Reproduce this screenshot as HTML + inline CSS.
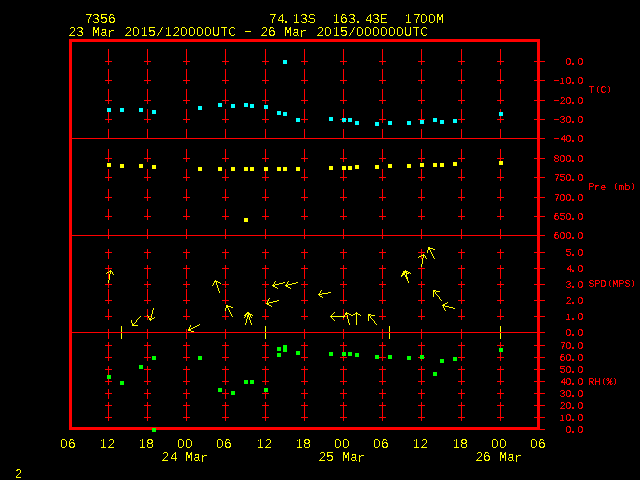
<!DOCTYPE html>
<html><head><meta charset="utf-8"><title>7356 station time series</title>
<style>
html,body{margin:0;padding:0;background:#000;width:640px;height:480px;overflow:hidden}
svg{display:block;will-change:transform}
text{font-family:"Liberation Mono",monospace}
.z{font-family:"Liberation Sans",sans-serif}
.s{font-family:"Liberation Serif",serif}
</style></head><body>
<svg width="640" height="480" viewBox="0 0 640 480" shape-rendering="crispEdges">
<title>Station 7356 time series: T(C), Pre (mb), SPD(MPS), RH(%)</title>
<defs>
<filter id="crispL" filterUnits="userSpaceOnUse" x="0" y="0" width="640" height="480" color-interpolation-filters="sRGB"><feComponentTransfer><feFuncA type="discrete" tableValues="0 0 0 1 1"/></feComponentTransfer></filter>
<filter id="crispS" filterUnits="userSpaceOnUse" x="0" y="0" width="640" height="480" color-interpolation-filters="sRGB"><feComponentTransfer><feFuncA type="discrete" tableValues="0 0 1 1 1"/></feComponentTransfer></filter>
</defs>
<rect width="640" height="480" fill="#000"/>
<path fill="#ff0000" d="M69 39h471v3h-471zM69 42h3v96h-3zM537 42h3v19h-3zM108 49h1v12h-1zM147 49h1v12h-1zM186 49h1v12h-1zM225 49h1v12h-1zM265 49h1v12h-1zM304 49h1v12h-1zM343 49h1v12h-1zM382 49h1v12h-1zM421 49h1v12h-1zM461 49h1v12h-1zM500 49h1v12h-1zM105 61h7v1h-7zM144 61h7v1h-7zM183 61h7v1h-7zM222 61h7v1h-7zM262 61h7v1h-7zM301 61h7v1h-7zM340 61h7v1h-7zM379 61h7v1h-7zM418 61h7v1h-7zM458 61h7v1h-7zM497 61h7v1h-7zM534 61h11v1h-11zM108 62h1v3h-1zM147 62h1v3h-1zM186 62h1v3h-1zM225 62h1v3h-1zM265 62h1v3h-1zM304 62h1v3h-1zM343 62h1v3h-1zM382 62h1v3h-1zM421 62h1v3h-1zM461 62h1v3h-1zM500 62h1v3h-1zM537 62h3v18h-3zM108 69h1v11h-1zM147 69h1v11h-1zM186 69h1v11h-1zM225 69h1v11h-1zM265 69h1v11h-1zM304 69h1v11h-1zM343 69h1v11h-1zM382 69h1v11h-1zM421 69h1v11h-1zM461 69h1v11h-1zM500 69h1v11h-1zM105 80h7v1h-7zM144 80h7v1h-7zM183 80h7v1h-7zM222 80h7v1h-7zM262 80h7v1h-7zM301 80h7v1h-7zM340 80h7v1h-7zM379 80h7v1h-7zM418 80h7v1h-7zM458 80h7v1h-7zM497 80h7v1h-7zM534 80h11v1h-11zM108 81h1v3h-1zM147 81h1v3h-1zM186 81h1v3h-1zM225 81h1v3h-1zM265 81h1v3h-1zM304 81h1v3h-1zM343 81h1v3h-1zM382 81h1v3h-1zM421 81h1v3h-1zM461 81h1v3h-1zM500 81h1v3h-1zM537 81h3v19h-3zM108 89h1v11h-1zM147 89h1v11h-1zM186 89h1v11h-1zM225 89h1v11h-1zM265 89h1v11h-1zM304 89h1v11h-1zM343 89h1v11h-1zM382 89h1v11h-1zM421 89h1v11h-1zM461 89h1v11h-1zM500 89h1v11h-1zM105 100h7v1h-7zM144 100h7v1h-7zM183 100h7v1h-7zM222 100h7v1h-7zM262 100h7v1h-7zM301 100h7v1h-7zM340 100h7v1h-7zM379 100h7v1h-7zM418 100h7v1h-7zM458 100h7v1h-7zM497 100h7v1h-7zM534 100h11v1h-11zM108 101h1v3h-1zM147 101h1v3h-1zM186 101h1v3h-1zM225 101h1v3h-1zM265 101h1v3h-1zM304 101h1v3h-1zM343 101h1v3h-1zM382 101h1v3h-1zM421 101h1v3h-1zM461 101h1v3h-1zM500 101h1v3h-1zM537 101h3v18h-3zM147 109h1v10h-1zM186 109h1v10h-1zM225 109h1v10h-1zM265 109h1v10h-1zM304 109h1v10h-1zM343 109h1v9h-1zM382 109h1v10h-1zM421 109h1v10h-1zM461 109h1v10h-1zM500 109h1v3h-1zM108 112h1v7h-1zM500 116h1v3h-1zM105 119h7v1h-7zM144 119h7v1h-7zM183 119h7v1h-7zM222 119h7v1h-7zM262 119h7v1h-7zM301 119h7v1h-7zM340 119h2v1h-2zM346 119h1v1h-1zM379 119h7v1h-7zM418 119h7v1h-7zM458 119h7v1h-7zM497 119h7v1h-7zM534 119h11v1h-11zM108 120h1v3h-1zM147 120h1v3h-1zM186 120h1v3h-1zM225 120h1v3h-1zM265 120h1v3h-1zM304 120h1v3h-1zM382 120h1v3h-1zM461 120h1v3h-1zM500 120h1v3h-1zM537 120h3v18h-3zM343 122h1v1h-1zM108 129h1v9h-1zM147 129h1v9h-1zM186 129h1v9h-1zM225 129h1v9h-1zM265 129h1v9h-1zM304 129h1v9h-1zM343 129h1v9h-1zM382 129h1v9h-1zM421 129h1v9h-1zM461 129h1v9h-1zM500 129h1v9h-1zM69 138h476v1h-476zM69 139h3v96h-3zM537 139h3v19h-3zM108 149h1v9h-1zM147 149h1v9h-1zM186 149h1v9h-1zM225 149h1v9h-1zM265 149h1v9h-1zM304 149h1v9h-1zM343 149h1v9h-1zM382 149h1v9h-1zM421 149h1v9h-1zM461 149h1v9h-1zM500 149h1v9h-1zM105 158h7v1h-7zM144 158h7v1h-7zM183 158h7v1h-7zM222 158h7v1h-7zM262 158h7v1h-7zM301 158h7v1h-7zM340 158h7v1h-7zM379 158h7v1h-7zM418 158h7v1h-7zM458 158h7v1h-7zM497 158h7v1h-7zM534 158h11v1h-11zM108 159h1v3h-1zM147 159h1v3h-1zM186 159h1v3h-1zM225 159h1v3h-1zM265 159h1v3h-1zM304 159h1v3h-1zM343 159h1v3h-1zM382 159h1v3h-1zM421 159h1v3h-1zM461 159h1v3h-1zM500 159h1v2h-1zM537 159h3v18h-3zM108 169h1v8h-1zM147 169h1v8h-1zM186 169h1v8h-1zM225 169h1v8h-1zM304 169h1v8h-1zM382 169h1v8h-1zM421 169h1v8h-1zM461 169h1v8h-1zM500 169h1v8h-1zM343 170h1v7h-1zM265 171h1v6h-1zM105 177h7v1h-7zM144 177h7v1h-7zM183 177h7v1h-7zM222 177h7v1h-7zM262 177h7v1h-7zM301 177h7v1h-7zM340 177h7v1h-7zM379 177h7v1h-7zM418 177h7v1h-7zM458 177h7v1h-7zM497 177h7v1h-7zM534 177h11v1h-11zM108 178h1v3h-1zM147 178h1v3h-1zM186 178h1v3h-1zM225 178h1v3h-1zM265 178h1v3h-1zM304 178h1v3h-1zM343 178h1v3h-1zM382 178h1v3h-1zM421 178h1v3h-1zM461 178h1v3h-1zM500 178h1v3h-1zM537 178h3v19h-3zM108 189h1v8h-1zM147 189h1v8h-1zM186 189h1v8h-1zM225 189h1v8h-1zM265 189h1v8h-1zM304 189h1v8h-1zM343 189h1v8h-1zM382 189h1v8h-1zM421 189h1v8h-1zM461 189h1v8h-1zM500 189h1v8h-1zM105 197h7v1h-7zM144 197h7v1h-7zM183 197h7v1h-7zM222 197h7v1h-7zM262 197h7v1h-7zM301 197h7v1h-7zM340 197h7v1h-7zM379 197h7v1h-7zM418 197h7v1h-7zM458 197h7v1h-7zM497 197h7v1h-7zM534 197h11v1h-11zM108 198h1v3h-1zM147 198h1v3h-1zM186 198h1v3h-1zM225 198h1v3h-1zM265 198h1v3h-1zM304 198h1v3h-1zM343 198h1v3h-1zM382 198h1v3h-1zM421 198h1v3h-1zM461 198h1v3h-1zM500 198h1v3h-1zM537 198h3v18h-3zM108 209h1v7h-1zM147 209h1v7h-1zM186 209h1v7h-1zM225 209h1v7h-1zM265 209h1v7h-1zM304 209h1v7h-1zM343 209h1v7h-1zM382 209h1v7h-1zM421 209h1v7h-1zM461 209h1v7h-1zM500 209h1v7h-1zM105 216h7v1h-7zM144 216h7v1h-7zM183 216h7v1h-7zM222 216h7v1h-7zM262 216h7v1h-7zM301 216h7v1h-7zM340 216h7v1h-7zM379 216h7v1h-7zM418 216h7v1h-7zM458 216h7v1h-7zM497 216h7v1h-7zM534 216h11v1h-11zM108 217h1v3h-1zM147 217h1v3h-1zM186 217h1v3h-1zM225 217h1v3h-1zM265 217h1v3h-1zM304 217h1v3h-1zM343 217h1v3h-1zM382 217h1v3h-1zM421 217h1v3h-1zM461 217h1v3h-1zM500 217h1v3h-1zM537 217h3v18h-3zM108 229h1v6h-1zM147 229h1v6h-1zM186 229h1v6h-1zM225 229h1v6h-1zM265 229h1v6h-1zM304 229h1v6h-1zM343 229h1v6h-1zM382 229h1v6h-1zM421 229h1v6h-1zM461 229h1v6h-1zM500 229h1v6h-1zM69 235h476v1h-476zM69 236h3v96h-3zM108 236h1v3h-1zM147 236h1v3h-1zM186 236h1v3h-1zM225 236h1v3h-1zM265 236h1v3h-1zM304 236h1v3h-1zM343 236h1v3h-1zM382 236h1v3h-1zM421 236h1v3h-1zM461 236h1v3h-1zM500 236h1v3h-1zM537 236h3v16h-3zM108 249h1v3h-1zM147 249h1v3h-1zM186 249h1v3h-1zM225 249h1v3h-1zM265 249h1v3h-1zM304 249h1v3h-1zM343 249h1v3h-1zM382 249h1v3h-1zM421 249h1v3h-1zM461 249h1v3h-1zM500 249h1v3h-1zM105 252h7v1h-7zM144 252h7v1h-7zM183 252h7v1h-7zM222 252h7v1h-7zM262 252h7v1h-7zM301 252h7v1h-7zM340 252h7v1h-7zM379 252h7v1h-7zM418 252h7v1h-7zM458 252h7v1h-7zM497 252h7v1h-7zM534 252h11v1h-11zM108 253h1v6h-1zM147 253h1v6h-1zM186 253h1v6h-1zM225 253h1v6h-1zM265 253h1v6h-1zM304 253h1v6h-1zM343 253h1v6h-1zM382 253h1v6h-1zM421 253h1v2h-1zM461 253h1v6h-1zM500 253h1v6h-1zM537 253h3v15h-3zM421 256h1v3h-1zM108 265h1v3h-1zM147 265h1v3h-1zM186 265h1v3h-1zM225 265h1v3h-1zM265 265h1v3h-1zM304 265h1v3h-1zM343 265h1v3h-1zM382 265h1v3h-1zM461 265h1v3h-1zM500 265h1v3h-1zM421 267h1v1h-1zM105 268h7v1h-7zM144 268h7v1h-7zM183 268h7v1h-7zM222 268h7v1h-7zM262 268h7v1h-7zM301 268h7v1h-7zM340 268h7v1h-7zM379 268h7v1h-7zM418 268h7v1h-7zM458 268h7v1h-7zM497 268h7v1h-7zM534 268h11v1h-11zM108 269h1v3h-1zM147 269h1v10h-1zM186 269h1v10h-1zM225 269h1v10h-1zM265 269h1v10h-1zM304 269h1v10h-1zM343 269h1v10h-1zM382 269h1v10h-1zM421 269h1v10h-1zM461 269h1v10h-1zM500 269h1v10h-1zM537 269h3v15h-3zM108 273h1v6h-1zM147 281h1v3h-1zM186 281h1v3h-1zM225 281h1v3h-1zM265 281h1v3h-1zM304 281h1v3h-1zM343 281h1v3h-1zM382 281h1v3h-1zM421 281h1v3h-1zM461 281h1v3h-1zM500 281h1v3h-1zM108 283h1v1h-1zM105 284h7v1h-7zM144 284h7v1h-7zM183 284h7v1h-7zM222 284h7v1h-7zM262 284h7v1h-7zM301 284h7v1h-7zM340 284h7v1h-7zM379 284h7v1h-7zM418 284h7v1h-7zM458 284h7v1h-7zM497 284h7v1h-7zM534 284h11v1h-11zM108 285h1v3h-1zM147 285h1v3h-1zM186 285h1v3h-1zM225 285h1v3h-1zM265 285h1v3h-1zM304 285h1v3h-1zM343 285h1v3h-1zM382 285h1v3h-1zM421 285h1v3h-1zM461 285h1v3h-1zM500 285h1v3h-1zM537 285h3v15h-3zM108 289h1v11h-1zM147 289h1v11h-1zM186 289h1v11h-1zM225 289h1v11h-1zM265 289h1v11h-1zM304 289h1v11h-1zM343 289h1v11h-1zM382 289h1v11h-1zM421 289h1v11h-1zM461 289h1v11h-1zM500 289h1v11h-1zM105 300h7v1h-7zM144 300h7v1h-7zM183 300h7v1h-7zM222 300h7v1h-7zM262 300h6v1h-6zM301 300h7v1h-7zM340 300h7v1h-7zM379 300h7v1h-7zM418 300h7v1h-7zM458 300h7v1h-7zM497 300h7v1h-7zM534 300h11v1h-11zM108 301h1v3h-1zM147 301h1v3h-1zM186 301h1v3h-1zM225 301h1v3h-1zM265 301h1v3h-1zM304 301h1v3h-1zM343 301h1v3h-1zM382 301h1v3h-1zM421 301h1v3h-1zM461 301h1v3h-1zM500 301h1v3h-1zM537 301h3v15h-3zM108 309h1v7h-1zM147 309h1v6h-1zM186 309h1v7h-1zM265 309h1v7h-1zM304 309h1v7h-1zM343 309h1v7h-1zM382 309h1v7h-1zM421 309h1v7h-1zM461 309h1v7h-1zM500 309h1v7h-1zM225 311h1v5h-1zM105 316h7v1h-7zM144 316h4v1h-4zM149 316h2v1h-2zM183 316h7v1h-7zM222 316h7v1h-7zM262 316h7v1h-7zM301 316h7v1h-7zM345 316h2v1h-2zM379 316h7v1h-7zM418 316h7v1h-7zM458 316h7v1h-7zM497 316h7v1h-7zM534 316h11v1h-11zM108 317h1v3h-1zM147 317h1v3h-1zM186 317h1v3h-1zM225 317h1v3h-1zM265 317h1v3h-1zM304 317h1v3h-1zM382 317h1v3h-1zM421 317h1v3h-1zM461 317h1v3h-1zM500 317h1v3h-1zM537 317h3v15h-3zM343 318h1v2h-1zM108 329h1v3h-1zM147 329h1v3h-1zM186 329h1v3h-1zM225 329h1v3h-1zM304 329h1v3h-1zM343 329h1v3h-1zM382 329h1v3h-1zM421 329h1v3h-1zM461 329h1v3h-1zM69 332h476v1h-476zM69 333h3v94h-3zM108 333h1v6h-1zM147 333h1v6h-1zM186 333h1v6h-1zM225 333h1v6h-1zM304 333h1v6h-1zM343 333h1v6h-1zM382 333h1v6h-1zM421 333h1v6h-1zM461 333h1v6h-1zM537 333h3v12h-3zM108 342h1v3h-1zM147 342h1v3h-1zM186 342h1v3h-1zM225 342h1v3h-1zM265 342h1v3h-1zM304 342h1v3h-1zM343 342h1v3h-1zM382 342h1v3h-1zM421 342h1v3h-1zM461 342h1v3h-1zM500 342h1v3h-1zM105 345h7v1h-7zM144 345h7v1h-7zM183 345h7v1h-7zM222 345h7v1h-7zM262 345h7v1h-7zM301 345h7v1h-7zM340 345h7v1h-7zM379 345h7v1h-7zM418 345h7v1h-7zM458 345h7v1h-7zM497 345h7v1h-7zM534 345h11v1h-11zM108 346h1v11h-1zM147 346h1v11h-1zM186 346h1v11h-1zM225 346h1v11h-1zM265 346h1v11h-1zM304 346h1v11h-1zM343 346h1v6h-1zM382 346h1v11h-1zM421 346h1v9h-1zM461 346h1v11h-1zM500 346h1v2h-1zM537 346h3v11h-3zM500 352h1v5h-1zM343 356h1v1h-1zM105 357h7v1h-7zM144 357h7v1h-7zM183 357h7v1h-7zM222 357h7v1h-7zM262 357h7v1h-7zM301 357h7v1h-7zM340 357h7v1h-7zM379 357h7v1h-7zM418 357h2v1h-2zM424 357h1v1h-1zM458 357h7v1h-7zM497 357h7v1h-7zM534 357h11v1h-11zM108 358h1v3h-1zM147 358h1v3h-1zM186 358h1v3h-1zM225 358h1v3h-1zM265 358h1v3h-1zM304 358h1v3h-1zM343 358h1v3h-1zM382 358h1v3h-1zM461 358h1v3h-1zM500 358h1v3h-1zM537 358h3v11h-3zM421 359h1v2h-1zM108 366h1v3h-1zM147 366h1v3h-1zM186 366h1v3h-1zM225 366h1v3h-1zM265 366h1v3h-1zM304 366h1v3h-1zM343 366h1v3h-1zM382 366h1v3h-1zM421 366h1v3h-1zM461 366h1v3h-1zM500 366h1v3h-1zM105 369h7v1h-7zM144 369h7v1h-7zM183 369h7v1h-7zM222 369h7v1h-7zM262 369h7v1h-7zM301 369h7v1h-7zM340 369h7v1h-7zM379 369h7v1h-7zM418 369h7v1h-7zM458 369h7v1h-7zM497 369h7v1h-7zM534 369h11v1h-11zM108 370h1v5h-1zM147 370h1v11h-1zM186 370h1v11h-1zM225 370h1v11h-1zM265 370h1v11h-1zM304 370h1v11h-1zM343 370h1v11h-1zM382 370h1v11h-1zM421 370h1v11h-1zM461 370h1v11h-1zM500 370h1v11h-1zM537 370h3v11h-3zM108 379h1v2h-1zM105 381h7v1h-7zM144 381h7v1h-7zM183 381h7v1h-7zM222 381h7v1h-7zM262 381h7v1h-7zM301 381h7v1h-7zM340 381h7v1h-7zM379 381h7v1h-7zM418 381h7v1h-7zM458 381h7v1h-7zM497 381h7v1h-7zM534 381h11v1h-11zM108 382h1v3h-1zM147 382h1v3h-1zM186 382h1v3h-1zM225 382h1v3h-1zM265 382h1v3h-1zM304 382h1v3h-1zM343 382h1v3h-1zM382 382h1v3h-1zM421 382h1v3h-1zM461 382h1v3h-1zM500 382h1v3h-1zM537 382h3v11h-3zM108 389h1v4h-1zM147 389h1v4h-1zM186 389h1v4h-1zM225 389h1v4h-1zM304 389h1v4h-1zM343 389h1v4h-1zM382 389h1v4h-1zM421 389h1v4h-1zM461 389h1v4h-1zM500 389h1v4h-1zM265 392h1v1h-1zM105 393h7v1h-7zM144 393h7v1h-7zM183 393h7v1h-7zM222 393h7v1h-7zM262 393h7v1h-7zM301 393h7v1h-7zM340 393h7v1h-7zM379 393h7v1h-7zM418 393h7v1h-7zM458 393h7v1h-7zM497 393h7v1h-7zM534 393h11v1h-11zM108 394h1v5h-1zM147 394h1v5h-1zM186 394h1v5h-1zM225 394h1v5h-1zM265 394h1v5h-1zM304 394h1v5h-1zM343 394h1v5h-1zM382 394h1v5h-1zM421 394h1v5h-1zM461 394h1v5h-1zM500 394h1v5h-1zM537 394h3v11h-3zM108 402h1v3h-1zM147 402h1v3h-1zM186 402h1v3h-1zM225 402h1v3h-1zM265 402h1v3h-1zM304 402h1v3h-1zM343 402h1v3h-1zM382 402h1v3h-1zM421 402h1v3h-1zM461 402h1v3h-1zM500 402h1v3h-1zM105 405h7v1h-7zM144 405h7v1h-7zM183 405h7v1h-7zM222 405h7v1h-7zM262 405h7v1h-7zM301 405h7v1h-7zM340 405h7v1h-7zM379 405h7v1h-7zM418 405h7v1h-7zM458 405h7v1h-7zM497 405h7v1h-7zM534 405h11v1h-11zM108 406h1v11h-1zM147 406h1v11h-1zM186 406h1v11h-1zM225 406h1v11h-1zM265 406h1v11h-1zM304 406h1v11h-1zM343 406h1v11h-1zM382 406h1v11h-1zM421 406h1v11h-1zM461 406h1v11h-1zM500 406h1v11h-1zM537 406h3v11h-3zM105 417h7v1h-7zM144 417h7v1h-7zM183 417h7v1h-7zM222 417h7v1h-7zM262 417h7v1h-7zM301 417h7v1h-7zM340 417h7v1h-7zM379 417h7v1h-7zM418 417h7v1h-7zM458 417h7v1h-7zM497 417h7v1h-7zM534 417h11v1h-11zM108 418h1v3h-1zM147 418h1v3h-1zM186 418h1v3h-1zM225 418h1v3h-1zM265 418h1v3h-1zM304 418h1v3h-1zM343 418h1v3h-1zM382 418h1v3h-1zM421 418h1v3h-1zM461 418h1v3h-1zM500 418h1v3h-1zM537 418h3v9h-3zM69 427h471v1h-471zM69 428h83v2h-83zM156 428h384v1h-384zM156 429h389v1h-389z"/>
<path fill="#ffff00" d="M499 161h4v4h-4zM453 162h4v4h-4zM107 163h4v4h-4zM420 163h4v4h-4zM433 163h4v4h-4zM440 163h4v4h-4zM120 164h4v4h-4zM139 164h4v4h-4zM388 164h4v4h-4zM407 164h4v4h-4zM152 165h4v4h-4zM355 165h4v4h-4zM375 165h4v4h-4zM329 166h4v4h-4zM342 166h4v4h-4zM348 166h4v4h-4zM198 167h4v4h-4zM218 167h4v4h-4zM231 167h4v4h-4zM244 167h4v4h-4zM250 167h4v4h-4zM264 167h4v4h-4zM277 167h4v4h-4zM283 167h4v4h-4zM296 167h4v4h-4zM244 218h4v4h-4zM428 247h2v1h-2zM428 248h5v1h-5zM428 249h2v1h-2zM433 249h2v1h-2zM427 250h1v3h-1zM430 250h1v2h-1zM431 252h1v2h-1zM423 254h1v1h-1zM432 254h1v2h-1zM421 255h4v1h-4zM419 256h2v1h-2zM423 256h1v2h-1zM425 256h1v2h-1zM433 256h1v2h-1zM418 257h1v1h-1zM422 258h1v6h-1zM426 258h1v1h-1zM434 258h1v1h-1zM421 264h1v3h-1zM110 270h1v1h-1zM405 270h1v1h-1zM109 271h3v1h-3zM403 271h5v1h-5zM107 272h2v1h-2zM110 272h1v2h-1zM112 272h1v2h-1zM403 272h4v1h-4zM408 272h2v1h-2zM106 273h1v1h-1zM402 273h3v2h-3zM406 273h3v1h-3zM410 273h1v1h-1zM109 274h1v6h-1zM113 274h1v1h-1zM406 274h1v1h-1zM401 275h2v1h-2zM405 275h2v2h-2zM401 276h1v1h-1zM406 277h2v2h-2zM407 279h1v2h-1zM108 280h1v3h-1zM215 280h1v1h-1zM214 281h4v1h-4zM275 281h1v1h-1zM288 281h1v1h-1zM408 281h1v2h-1zM214 282h1v1h-1zM216 282h1v3h-1zM218 282h2v1h-2zM274 282h1v2h-1zM283 282h2v1h-2zM287 282h1v2h-1zM296 282h2v1h-2zM213 283h1v2h-1zM220 283h1v1h-1zM279 283h4v1h-4zM292 283h4v1h-4zM273 284h1v1h-1zM275 284h4v1h-4zM286 284h1v1h-1zM288 284h4v1h-4zM212 285h1v1h-1zM217 285h1v3h-1zM272 285h3v1h-3zM285 285h3v1h-3zM273 286h2v1h-2zM286 286h2v1h-2zM275 287h2v1h-2zM288 287h2v1h-2zM218 288h1v3h-1zM277 288h1v1h-1zM290 288h1v1h-1zM321 290h1v1h-1zM433 290h3v1h-3zM219 291h1v2h-1zM320 291h1v2h-1zM433 291h2v1h-2zM436 291h4v1h-4zM328 292h3v1h-3zM433 292h1v5h-1zM435 292h1v2h-1zM319 293h1v1h-1zM322 293h6v1h-6zM318 294h4v1h-4zM436 294h1v1h-1zM319 295h1v1h-1zM437 295h1v1h-1zM320 296h2v1h-2zM438 296h1v1h-1zM322 297h1v1h-1zM439 297h1v2h-1zM269 298h1v1h-1zM268 299h1v2h-1zM440 299h1v1h-1zM277 300h2v1h-2zM441 300h1v1h-1zM267 301h1v2h-1zM273 301h4v1h-4zM269 302h4v1h-4zM447 302h1v1h-1zM266 303h3v1h-3zM445 303h2v1h-2zM267 304h2v1h-2zM443 304h2v1h-2zM226 305h2v1h-2zM269 305h2v1h-2zM442 305h3v1h-3zM226 306h5v1h-5zM271 306h1v1h-1zM443 306h1v2h-1zM445 306h4v1h-4zM226 307h2v1h-2zM231 307h2v1h-2zM449 307h4v1h-4zM153 308h1v2h-1zM225 308h1v3h-1zM228 308h1v2h-1zM444 308h1v2h-1zM453 308h2v1h-2zM152 310h1v4h-1zM229 310h1v2h-1zM445 310h1v1h-1zM230 312h1v2h-1zM247 312h2v1h-2zM334 312h1v1h-1zM346 312h1v1h-1zM356 312h1v1h-1zM246 313h4v1h-4zM333 313h1v1h-1zM345 313h4v1h-4zM355 313h3v1h-3zM151 314h1v4h-1zM231 314h1v2h-1zM245 314h2v1h-2zM248 314h4v1h-4zM332 314h1v1h-1zM345 314h2v1h-2zM349 314h2v1h-2zM353 314h2v1h-2zM356 314h1v11h-1zM358 314h2v1h-2zM368 314h3v1h-3zM147 315h1v1h-1zM244 315h2v1h-2zM247 315h2v2h-2zM250 315h1v2h-1zM252 315h1v1h-1zM331 315h1v1h-1zM344 315h1v1h-1zM347 315h1v4h-1zM351 315h2v1h-2zM360 315h1v1h-1zM368 315h2v1h-2zM371 315h4v1h-4zM140 316h1v1h-1zM148 316h1v2h-1zM232 316h1v1h-1zM245 316h1v1h-1zM330 316h15v1h-15zM368 316h1v5h-1zM370 316h1v2h-1zM139 317h1v1h-1zM154 317h1v1h-1zM244 317h1v1h-1zM247 317h1v2h-1zM249 317h1v3h-1zM251 317h1v1h-1zM331 317h1v1h-1zM343 317h1v1h-1zM138 318h1v1h-1zM149 318h2v1h-2zM152 318h2v1h-2zM332 318h1v1h-1zM371 318h1v1h-1zM137 319h1v1h-1zM149 319h3v1h-3zM246 319h1v4h-1zM333 319h1v1h-1zM348 319h1v4h-1zM372 319h1v1h-1zM131 320h1v3h-1zM136 320h1v2h-1zM150 320h1v1h-1zM250 320h1v3h-1zM334 320h1v1h-1zM373 320h1v1h-1zM374 321h1v2h-1zM135 322h1v1h-1zM132 323h1v1h-1zM134 323h1v1h-1zM245 323h1v2h-1zM251 323h1v2h-1zM349 323h1v2h-1zM375 323h1v1h-1zM132 324h2v1h-2zM199 324h1v1h-1zM376 324h1v1h-1zM132 325h6v1h-6zM190 325h1v2h-1zM197 325h2v1h-2zM121 326h1v6h-1zM195 326h2v1h-2zM265 326h1v6h-1zM389 326h1v6h-1zM500 326h1v6h-1zM189 327h1v2h-1zM193 327h2v1h-2zM191 328h2v1h-2zM188 329h3v2h-3zM191 331h3v1h-3zM121 333h1v6h-1zM265 333h1v6h-1zM389 333h1v6h-1zM500 333h1v6h-1z"/>
<path fill="#00ffff" d="M283 60h4v4h-4zM218 103h4v4h-4zM244 103h4v4h-4zM231 104h4v4h-4zM250 104h4v4h-4zM264 105h4v4h-4zM198 106h4v4h-4zM107 108h4v4h-4zM120 108h4v4h-4zM139 108h4v4h-4zM152 110h4v4h-4zM277 111h4v4h-4zM283 112h4v4h-4zM499 112h4v4h-4zM329 117h4v4h-4zM296 118h4v4h-4zM342 118h4v4h-4zM348 118h4v4h-4zM433 118h4v4h-4zM453 119h4v4h-4zM420 120h4v4h-4zM440 120h4v4h-4zM355 121h4v4h-4zM388 121h4v4h-4zM407 121h4v4h-4zM375 122h4v4h-4z"/>
<path fill="#00ff00" d="M283 345h4v7h-4zM277 347h4v4h-4zM499 348h4v4h-4zM296 351h4v4h-4zM329 352h4v4h-4zM342 352h4v4h-4zM348 352h4v4h-4zM277 353h4v4h-4zM355 353h4v4h-4zM375 355h4v4h-4zM388 355h4v4h-4zM420 355h4v4h-4zM152 356h4v4h-4zM198 356h4v4h-4zM407 356h4v4h-4zM453 357h4v4h-4zM440 359h4v4h-4zM139 365h4v4h-4zM433 372h4v4h-4zM107 375h4v4h-4zM244 380h4v4h-4zM250 380h4v4h-4zM120 381h4v4h-4zM218 388h4v4h-4zM264 388h4v4h-4zM231 391h4v4h-4zM152 428h4v4h-4z"/>
<g filter="url(#crispL)">
<text x="84.75 92.25 100.25 107.75" y="23 23 23 23" font-size="13.4" fill="#ffff00" xml:space="preserve">7<tspan class="z">3</tspan><tspan class="z">5</tspan>6</text>
<text x="268.75 277.0 282.0 293.0 300.25 307.5" y="23 23 22.5 23 23 23" font-size="13.4" fill="#ffff00" xml:space="preserve">74.<tspan class="z" font-size="12.8">1</tspan><tspan class="z">3</tspan><tspan class="z" font-size="12.8">S</tspan></text>
<text x="333.0 339.75 348.25 354.0 365.0 372.25 379.75" y="23 23 23 22.5 23 23 23" font-size="13.4" fill="#ffff00" xml:space="preserve"><tspan class="z" font-size="12.8">1</tspan>6<tspan class="z">3</tspan>.4<tspan class="z">3</tspan>E</text>
<text x="405.0 412.75 420.0 428.0 436.0" y="23 23 23 23 23" font-size="13.4" fill="#ffff00" xml:space="preserve"><tspan class="z" font-size="12.8">1</tspan>7<tspan class="z">0</tspan><tspan class="z">0</tspan>M</text>
<text x="68.25 76.25 84.0 92.0 100.25 107.0 116.0 124.25 132.0 141.0 148.25 156.25 165.0 172.25 180.0 188.0 196.0 204.0 212.0 220.25 228.25 236.0" y="36 36 36 36 36 36.5 36 36 36 36 36 36 36 36 36 36 36 36 36 36 36 36" font-size="13.4" fill="#ffff00" xml:space="preserve">2<tspan class="z">3</tspan> M<tspan font-size="12.8">a</tspan>r 2<tspan class="z">0</tspan><tspan class="z" font-size="12.8">1</tspan><tspan class="z">5</tspan><tspan font-size="12.8">/</tspan><tspan class="z" font-size="12.8">1</tspan>2<tspan class="z">0</tspan><tspan class="z">0</tspan><tspan class="z">0</tspan><tspan class="z">0</tspan>U<tspan font-size="12.8">T</tspan>C </text>
<text transform="translate(248.0 35) scale(1.5 1)" text-anchor="middle" font-size="13.4" fill="#ffff00">-</text>
<text x="252.0 260.25 267.75 276.0 284.0 292.25 299.0 308.0 316.25 324.0 333.0 340.25 348.25 356.0 364.0 372.0 380.0 388.0 396.0 404.0 412.25 420.25" y="36 36 36 36 36 36 36.5 36 36 36 36 36 36 36 36 36 36 36 36 36 36 36" font-size="13.4" fill="#ffff00" xml:space="preserve"> 26 M<tspan font-size="12.8">a</tspan>r 2<tspan class="z">0</tspan><tspan class="z" font-size="12.8">1</tspan><tspan class="z">5</tspan><tspan font-size="12.8">/</tspan><tspan class="z">0</tspan><tspan class="z">0</tspan><tspan class="z">0</tspan><tspan class="z">0</tspan><tspan class="z">0</tspan><tspan class="z">0</tspan>U<tspan font-size="12.8">T</tspan>C</text>
<text x="60.0 67.75" y="448 448" font-size="13.4" fill="#ffff00" xml:space="preserve"><tspan class="z">0</tspan>6</text>
<text x="100.0 107.25" y="448 448" font-size="13.4" fill="#ffff00" xml:space="preserve"><tspan class="z" font-size="12.8">1</tspan>2</text>
<text x="139.0 146.0" y="448 448" font-size="13.4" fill="#ffff00" xml:space="preserve"><tspan class="z" font-size="12.8">1</tspan>8</text>
<text x="177.0 185.0" y="448 448" font-size="13.4" fill="#ffff00" xml:space="preserve"><tspan class="z">0</tspan><tspan class="z">0</tspan></text>
<text x="216.0 223.75" y="448 448" font-size="13.4" fill="#ffff00" xml:space="preserve"><tspan class="z">0</tspan>6</text>
<text x="257.0 264.25" y="448 448" font-size="13.4" fill="#ffff00" xml:space="preserve"><tspan class="z" font-size="12.8">1</tspan>2</text>
<text x="296.0 303.0" y="448 448" font-size="13.4" fill="#ffff00" xml:space="preserve"><tspan class="z" font-size="12.8">1</tspan>8</text>
<text x="334.0 342.0" y="448 448" font-size="13.4" fill="#ffff00" xml:space="preserve"><tspan class="z">0</tspan><tspan class="z">0</tspan></text>
<text x="373.0 380.75" y="448 448" font-size="13.4" fill="#ffff00" xml:space="preserve"><tspan class="z">0</tspan>6</text>
<text x="413.0 420.25" y="448 448" font-size="13.4" fill="#ffff00" xml:space="preserve"><tspan class="z" font-size="12.8">1</tspan>2</text>
<text x="453.0 460.0" y="448 448" font-size="13.4" fill="#ffff00" xml:space="preserve"><tspan class="z" font-size="12.8">1</tspan>8</text>
<text x="491.0 499.0" y="448 448" font-size="13.4" fill="#ffff00" xml:space="preserve"><tspan class="z">0</tspan><tspan class="z">0</tspan></text>
<text x="530.0 537.75" y="448 448" font-size="13.4" fill="#ffff00" xml:space="preserve"><tspan class="z">0</tspan>6</text>
<text x="161.25 170.0 177.0 185.0 193.25 200.0" y="461 461 461 461 461 461.5" font-size="13.4" fill="#ffff00" xml:space="preserve">24 M<tspan font-size="12.8">a</tspan>r</text>
<text x="318.25 326.25 334.0 342.0 350.25 357.0" y="461 461 461 461 461 461.5" font-size="13.4" fill="#ffff00" xml:space="preserve">2<tspan class="z">5</tspan> M<tspan font-size="12.8">a</tspan>r</text>
<text x="475.25 482.75 491.0 499.0 507.25 514.0" y="461 461 461 461 461 461.5" font-size="13.4" fill="#ffff00" xml:space="preserve">26 M<tspan font-size="12.8">a</tspan>r</text>
<text x="15.0" y="478" font-size="12.2" fill="#ffff00" xml:space="preserve">2</text>
</g>
<g filter="url(#crispS)">
<text x="565.75 571.5 577.75" y="65 64.5 65" font-size="10.0" fill="#ff0000" xml:space="preserve"><tspan class="s" font-size="11">0</tspan><tspan class="z" font-weight="bold">.</tspan><tspan class="s" font-size="11">0</tspan></text>
<text transform="translate(556.5 83) scale(1.8 1)" text-anchor="middle" font-size="10.0" fill="#ff0000">-</text>
<text x="559.5 565.75 571.5 577.75" y="84 84 83.5 84" font-size="10.0" fill="#ff0000" xml:space="preserve"><tspan class="z" font-size="9.5">1</tspan><tspan class="s" font-size="11">0</tspan><tspan class="z" font-weight="bold">.</tspan><tspan class="s" font-size="11">0</tspan></text>
<text transform="translate(556.5 103) scale(1.8 1)" text-anchor="middle" font-size="10.0" fill="#ff0000">-</text>
<text x="559.75 565.75 571.5 577.75" y="104 104 103.5 104" font-size="10.0" fill="#ff0000" xml:space="preserve">2<tspan class="s" font-size="11">0</tspan><tspan class="z" font-weight="bold">.</tspan><tspan class="s" font-size="11">0</tspan></text>
<text transform="translate(556.5 122) scale(1.8 1)" text-anchor="middle" font-size="10.0" fill="#ff0000">-</text>
<text x="559.5 565.75 571.5 577.75" y="123 123 122.5 123" font-size="10.0" fill="#ff0000" xml:space="preserve">3<tspan class="s" font-size="11">0</tspan><tspan class="z" font-weight="bold">.</tspan><tspan class="s" font-size="11">0</tspan></text>
<text transform="translate(556.5 141) scale(1.8 1)" text-anchor="middle" font-size="10.0" fill="#ff0000">-</text>
<text x="560.5 565.75 571.5 577.75" y="142 142 141.5 142" font-size="10.0" fill="#ff0000" xml:space="preserve"><tspan font-size="10.5">4</tspan><tspan class="s" font-size="11">0</tspan><tspan class="z" font-weight="bold">.</tspan><tspan class="s" font-size="11">0</tspan></text>
<text x="553.5 559.75 565.75 571.5 577.75" y="162 162 162 161.5 162" font-size="10.0" fill="#ff0000" xml:space="preserve">8<tspan class="s" font-size="11">0</tspan><tspan class="s" font-size="11">0</tspan><tspan class="z" font-weight="bold">.</tspan><tspan class="s" font-size="11">0</tspan></text>
<text x="554.0 559.5 565.75 571.5 577.75" y="181 181 181 180.5 181" font-size="10.0" fill="#ff0000" xml:space="preserve">7<tspan font-size="10.5">5</tspan><tspan class="s" font-size="11">0</tspan><tspan class="z" font-weight="bold">.</tspan><tspan class="s" font-size="11">0</tspan></text>
<text x="554.0 559.75 565.75 571.5 577.75" y="201 201 201 200.5 201" font-size="10.0" fill="#ff0000" xml:space="preserve">7<tspan class="s" font-size="11">0</tspan><tspan class="s" font-size="11">0</tspan><tspan class="z" font-weight="bold">.</tspan><tspan class="s" font-size="11">0</tspan></text>
<text x="553.5 559.5 565.75 571.5 577.75" y="220 220 220 219.5 220" font-size="10.0" fill="#ff0000" xml:space="preserve">6<tspan font-size="10.5">5</tspan><tspan class="s" font-size="11">0</tspan><tspan class="z" font-weight="bold">.</tspan><tspan class="s" font-size="11">0</tspan></text>
<text x="553.5 559.75 565.75 571.5 577.75" y="239 239 239 238.5 239" font-size="10.0" fill="#ff0000" xml:space="preserve">6<tspan class="s" font-size="11">0</tspan><tspan class="s" font-size="11">0</tspan><tspan class="z" font-weight="bold">.</tspan><tspan class="s" font-size="11">0</tspan></text>
<text x="565.5 571.5 577.75" y="256 255.5 256" font-size="10.0" fill="#ff0000" xml:space="preserve"><tspan font-size="10.5">5</tspan><tspan class="z" font-weight="bold">.</tspan><tspan class="s" font-size="11">0</tspan></text>
<text x="566.5 571.5 577.75" y="272 271.5 272" font-size="10.0" fill="#ff0000" xml:space="preserve"><tspan font-size="10.5">4</tspan><tspan class="z" font-weight="bold">.</tspan><tspan class="s" font-size="11">0</tspan></text>
<text x="565.5 571.5 577.75" y="288 287.5 288" font-size="10.0" fill="#ff0000" xml:space="preserve">3<tspan class="z" font-weight="bold">.</tspan><tspan class="s" font-size="11">0</tspan></text>
<text x="565.75 571.5 577.75" y="304 303.5 304" font-size="10.0" fill="#ff0000" xml:space="preserve">2<tspan class="z" font-weight="bold">.</tspan><tspan class="s" font-size="11">0</tspan></text>
<text x="565.5 571.5 577.75" y="320 319.5 320" font-size="10.0" fill="#ff0000" xml:space="preserve"><tspan class="z" font-size="9.5">1</tspan><tspan class="z" font-weight="bold">.</tspan><tspan class="s" font-size="11">0</tspan></text>
<text x="565.75 571.5 577.75" y="336 335.5 336" font-size="10.0" fill="#ff0000" xml:space="preserve"><tspan class="s" font-size="11">0</tspan><tspan class="z" font-weight="bold">.</tspan><tspan class="s" font-size="11">0</tspan></text>
<text x="560.0 565.75 571.5 577.75" y="349 349 348.5 349" font-size="10.0" fill="#ff0000" xml:space="preserve">7<tspan class="s" font-size="11">0</tspan><tspan class="z" font-weight="bold">.</tspan><tspan class="s" font-size="11">0</tspan></text>
<text x="559.5 565.75 571.5 577.75" y="361 361 360.5 361" font-size="10.0" fill="#ff0000" xml:space="preserve">6<tspan class="s" font-size="11">0</tspan><tspan class="z" font-weight="bold">.</tspan><tspan class="s" font-size="11">0</tspan></text>
<text x="559.5 565.75 571.5 577.75" y="373 373 372.5 373" font-size="10.0" fill="#ff0000" xml:space="preserve"><tspan font-size="10.5">5</tspan><tspan class="s" font-size="11">0</tspan><tspan class="z" font-weight="bold">.</tspan><tspan class="s" font-size="11">0</tspan></text>
<text x="560.5 565.75 571.5 577.75" y="385 385 384.5 385" font-size="10.0" fill="#ff0000" xml:space="preserve"><tspan font-size="10.5">4</tspan><tspan class="s" font-size="11">0</tspan><tspan class="z" font-weight="bold">.</tspan><tspan class="s" font-size="11">0</tspan></text>
<text x="559.5 565.75 571.5 577.75" y="397 397 396.5 397" font-size="10.0" fill="#ff0000" xml:space="preserve">3<tspan class="s" font-size="11">0</tspan><tspan class="z" font-weight="bold">.</tspan><tspan class="s" font-size="11">0</tspan></text>
<text x="559.75 565.75 571.5 577.75" y="409 409 408.5 409" font-size="10.0" fill="#ff0000" xml:space="preserve">2<tspan class="s" font-size="11">0</tspan><tspan class="z" font-weight="bold">.</tspan><tspan class="s" font-size="11">0</tspan></text>
<text x="559.5 565.75 571.5 577.75" y="421 421 420.5 421" font-size="10.0" fill="#ff0000" xml:space="preserve"><tspan class="z" font-size="9.5">1</tspan><tspan class="s" font-size="11">0</tspan><tspan class="z" font-weight="bold">.</tspan><tspan class="s" font-size="11">0</tspan></text>
<text x="565.75 571.5 577.75" y="433 432.5 433" font-size="10.0" fill="#ff0000" xml:space="preserve"><tspan class="s" font-size="11">0</tspan><tspan class="z" font-weight="bold">.</tspan><tspan class="s" font-size="11">0</tspan></text>
<text x="588.5 595.5 600.5 606.5" y="93 90.5 93 90.5" font-size="10.0" fill="#ff0000" xml:space="preserve">T<tspan font-size="8">(</tspan>C<tspan font-size="8">)</tspan></text>
<text x="588.5 594.0 600.5 606.5 613.5 618.25 624.75 630.5" y="190 190 190 190 187.5 190 190 187.5" font-size="10.0" fill="#ff0000" xml:space="preserve">P<tspan font-size="9.5">r</tspan><tspan font-size="9.5">e</tspan> <tspan font-size="8">(</tspan><tspan font-size="9.5">m</tspan><tspan class="z" font-size="9.5">b</tspan><tspan font-size="8">)</tspan></text>
<text x="588.5 594.5 600.5 607.5 612.25 618.5 624.5 630.5" y="287 287 287 284.5 287 287 287 284.5" font-size="10.0" fill="#ff0000" xml:space="preserve">SPD<tspan font-size="8">(</tspan>MPS<tspan font-size="8">)</tspan></text>
<text x="588.25 594.5 601.5 606.5 612.5" y="385 385 382.5 385 382.5" font-size="10.0" fill="#ff0000" xml:space="preserve"><tspan font-size="10.5">R</tspan>H<tspan font-size="8">(</tspan>%<tspan font-size="8">)</tspan></text>
</g>
</svg>
</body></html>
